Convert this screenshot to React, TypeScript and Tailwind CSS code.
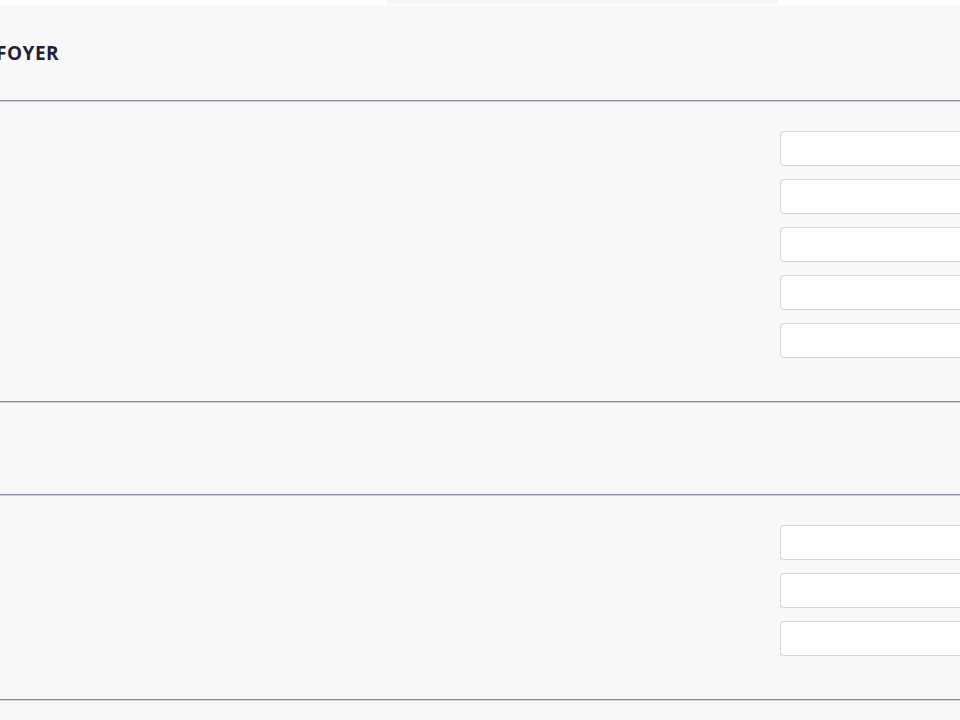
const SECTIONS = [
  { id: 'a', rows: 5 },
  { id: 'b', rows: 0 },
  { id: 'c', rows: 3 },
]

function Field() {
  return (
    <input
      type="text"
      className="block w-[300px] h-[35px] mb-[13px] last:mb-0 rounded-[4px] border border-[#d6d6d6] bg-white outline-none"
    />
  )
}

function Divider() {
  return (
    <div>
      <div className="h-px bg-[#8f8a9e]" />
      <div className="h-px bg-[#d3d0da]" />
    </div>
  )
}

export default function App() {
  return (
    <div className="w-[960px] h-[720px] overflow-hidden bg-[#f8f8f8] font-['Open_Sans',sans-serif]">
      <div className="h-[5px] bg-white">
        <div className="ml-[387px] w-[391px] h-[4px] bg-[#f6f6f6]" />
      </div>
      <div className="h-[95px] flex items-center pt-[2px]">
        <h1 className="-ml-[4px] text-[19px] font-bold tracking-[0.5px] text-[#261d38]">FOYER</h1>
      </div>
      <Divider />
      {SECTIONS.map(s => (
        <div key={s.id}>
          {s.rows > 0 ? (
            <div className="pl-[780px] pt-[29px] pb-[43px]">
              {Array.from({ length: s.rows }).map((_, i) => (
                <Field key={i} />
              ))}
            </div>
          ) : (
            <div className="h-[91px]" />
          )}
          <Divider />
        </div>
      ))}
    </div>
  )
}
